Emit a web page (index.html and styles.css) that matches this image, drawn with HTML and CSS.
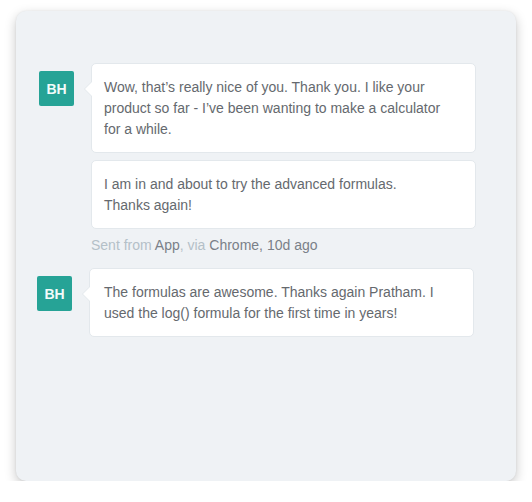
FILE: index.html
```html
<!DOCTYPE html>
<html>
<head>
<meta charset="utf-8">
<link rel="stylesheet" href="styles.css">
</head>
<body>
<div class="card">
  <div class="group">
    <div class="avatar">BH</div>
    <div class="msgs">
      <div class="bubble arrow">Wow, that’s really nice of you. Thank you. I like your product so far - I’ve been wanting to make a calculator for a while.</div>
      <div class="bubble">I am in and about to try the advanced formulas. Thanks again!</div>
      <div class="meta">Sent from <span class="dark">App</span>, via <span class="dark">Chrome, 10d ago</span></div>
    </div>
  </div>
  <div class="group g2">
    <div class="avatar">BH</div>
    <div class="msgs">
      <div class="bubble arrow">The formulas are awesome. Thanks again Pratham. I used the log() formula for the first time in years!</div>
    </div>
  </div>
</div>
</body>
</html>
```
FILE: styles.css
```css
html, body { margin: 0; padding: 0; background: #ffffff; }
body {
  font-family: "Liberation Sans", Arial, sans-serif;
  padding: 11px 16px 0 16px;
}
.card {
  width: 500px;
  height: 470px;
  box-sizing: border-box;
  background: #eff2f5;
  border-radius: 10px;
  box-shadow: 0 4px 12px rgba(0,0,0,0.22), 0 0 2px rgba(0,0,0,0.08);
  padding: 52px 40px 0 23px;
}
.group { display: flex; align-items: flex-start; }
.g2 { margin-top: 13px; margin-left: -2px; margin-right: 2px; }
.g2 .bubble { padding-left: 14px; padding-right: 30px; }
.avatar {
  width: 35px; height: 35px;
  margin-top: 8px;
  background: #26a396;
  color: #f2fbfa;
  border-radius: 2px;
  font-weight: bold;
  font-size: 14px;
  display: flex; align-items: center; justify-content: center;
  flex: none;
}
.msgs { margin-left: 17px; flex: 1; display: flex; flex-direction: column; gap: 7px; }
.bubble {
  position: relative;
  background: #fff;
  border: 1px solid #e3e8ec;
  border-radius: 5px;
  padding: 13px 32px 12px 12px;
  font-size: 14px;
  line-height: 21px;
  color: #65696e;
}
.arrow::before {
  content: "";
  position: absolute;
  left: -8px; top: 17px;
  width: 0; height: 0;
  border-top: 8px solid transparent;
  border-bottom: 8px solid transparent;
  border-right: 8px solid #e3e8ec;
}
.arrow::after {
  content: "";
  position: absolute;
  left: -7px; top: 18px;
  width: 0; height: 0;
  border-top: 7px solid transparent;
  border-bottom: 7px solid transparent;
  border-right: 7px solid #fff;
}
.meta {
  margin-top: -1px;
  font-size: 14px;
  line-height: 20px;
  color: #b4c0c8;
}
.dark { color: #7a8088; }
```
